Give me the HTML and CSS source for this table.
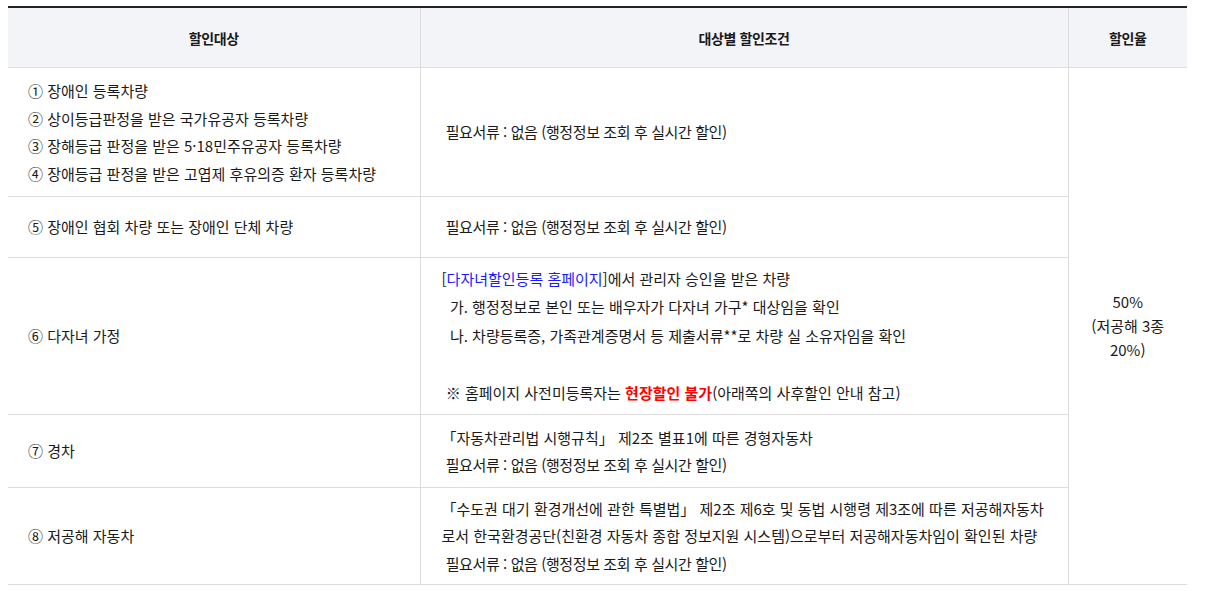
FILE: index.html
```html
<!DOCTYPE html>
<html lang="ko">
<head>
<meta charset="utf-8">
<link rel="stylesheet" href="styles.css">
</head>
<body>
<table class="tbl">
  <colgroup>
    <col class="c1">
    <col class="c2">
    <col class="c3">
  </colgroup>
  <thead>
    <tr class="rh">
      <th>할인대상</th>
      <th>대상별 할인조건</th>
      <th>할인율</th>
    </tr>
  </thead>
  <tbody>
    <tr class="r1">
      <td class="t1">① 장애인 등록차량<br>② 상이등급판정을 받은 국가유공자 등록차량<br>③ 장해등급 판정을 받은 5·18민주유공자 등록차량<br>④ 장애등급 판정을 받은 고엽제 후유의증 환자 등록차량</td>
      <td class="t2">&nbsp;<span class="doc">필요서류 : 없음 (행정정보 조회 후 실시간 할인)</span></td>
      <td class="t3" rowspan="5">50%<br>(저공해 3종 20%)</td>
    </tr>
    <tr class="r2">
      <td class="t1">⑤ 장애인 협회 차량 또는 장애인 단체 차량</td>
      <td class="t2">&nbsp;<span class="doc">필요서류 : 없음 (행정정보 조회 후 실시간 할인)</span></td>
    </tr>
    <tr class="r3">
      <td class="t1">⑥ 다자녀 가정</td>
      <td class="t2 lh28">[<span class="link">다자녀할인등록 홈페이지</span>]에서 관리자 승인을 받은 차량<br>&nbsp;&nbsp;가. 행정정보로 본인 또는 배우자가 다자녀 가구* 대상임을 확인<br>&nbsp;&nbsp;나. 차량등록증, 가족관계증명서 등 제출서류**로 차량 실 소유자임을 확인<br><br>&nbsp;※ 홈페이지 사전미등록자는 <strong class="red">현장할인 불가</strong>(아래쪽의 사후할인 안내 참고)</td>
    </tr>
    <tr class="r4">
      <td class="t1">⑦ 경차</td>
      <td class="t2">「자동차관리법 시행규칙」 제2조 별표1에 따른 경형자동차<br>&nbsp;<span class="doc">필요서류 : 없음 (행정정보 조회 후 실시간 할인)</span></td>
    </tr>
    <tr class="r5">
      <td class="t1">⑧ 저공해 자동차</td>
      <td class="t2">「수도권 대기 환경개선에 관한 특별법」 제2조 제6호 및 동법 시행령 제3조에 따른 저공해자동차로서 한국환경공단(친환경 자동차 종합 정보지원 시스템)으로부터 저공해자동차임이 확인된 차량<br>&nbsp;<span class="doc">필요서류 : 없음 (행정정보 조회 후 실시간 할인)</span></td>
    </tr>
  </tbody>
</table>
</body>
</html>
```

FILE: styles.css
```css
html, body {
  background: #ffffff;
}
body {
  margin: 6px 8px 0 8px;
  font-family: "Noto Sans CJK KR", "Noto Sans", sans-serif;
  font-size: 15px;
  color: #1a1a1a;
}
.tbl {
  width: 1179px;
  border-collapse: collapse;
  table-layout: fixed;
  border-top: 2px solid #222222;
}
.c1 { width: 412px; }
.c2 { width: 648px; }
.c3 { width: 119px; }
.tbl th {
  background: #f3f4f8;
  font-size: 14px;
  font-weight: 700;
  letter-spacing: -0.4px;
  height: 59px;
  padding: 0;
  text-align: center;
  border-bottom: 1px solid #dddddd;
  border-left: 1px solid #dddddd;
}
.tbl th:first-child { border-left: none; }
.tbl td {
  border-bottom: 1px solid #dddddd;
  border-left: 1px solid #dddddd;
  line-height: 27.5px;
  vertical-align: middle;
  padding: 0;
}
.tbl td.t1 {
  border-left: none;
  padding-left: 20px;
}
.tbl td.t2 {
  padding-left: 21px;
  padding-right: 18px;
}
.tbl td.t3 {
  text-align: center;
  line-height: 24px;
  padding: 0 18px;
}
.doc { letter-spacing: -0.4px; }
.lh28 { line-height: 28.5px !important; }
.r1 td { height: 128px; }
.r2 td { height: 60px; }
.r3 td { height: 156px; }
.r4 td { height: 72px; }
.r5 td { height: 96px; }
.link { color: #1a1aff; }
.red { color: #ff0000; font-weight: 700; }
```
